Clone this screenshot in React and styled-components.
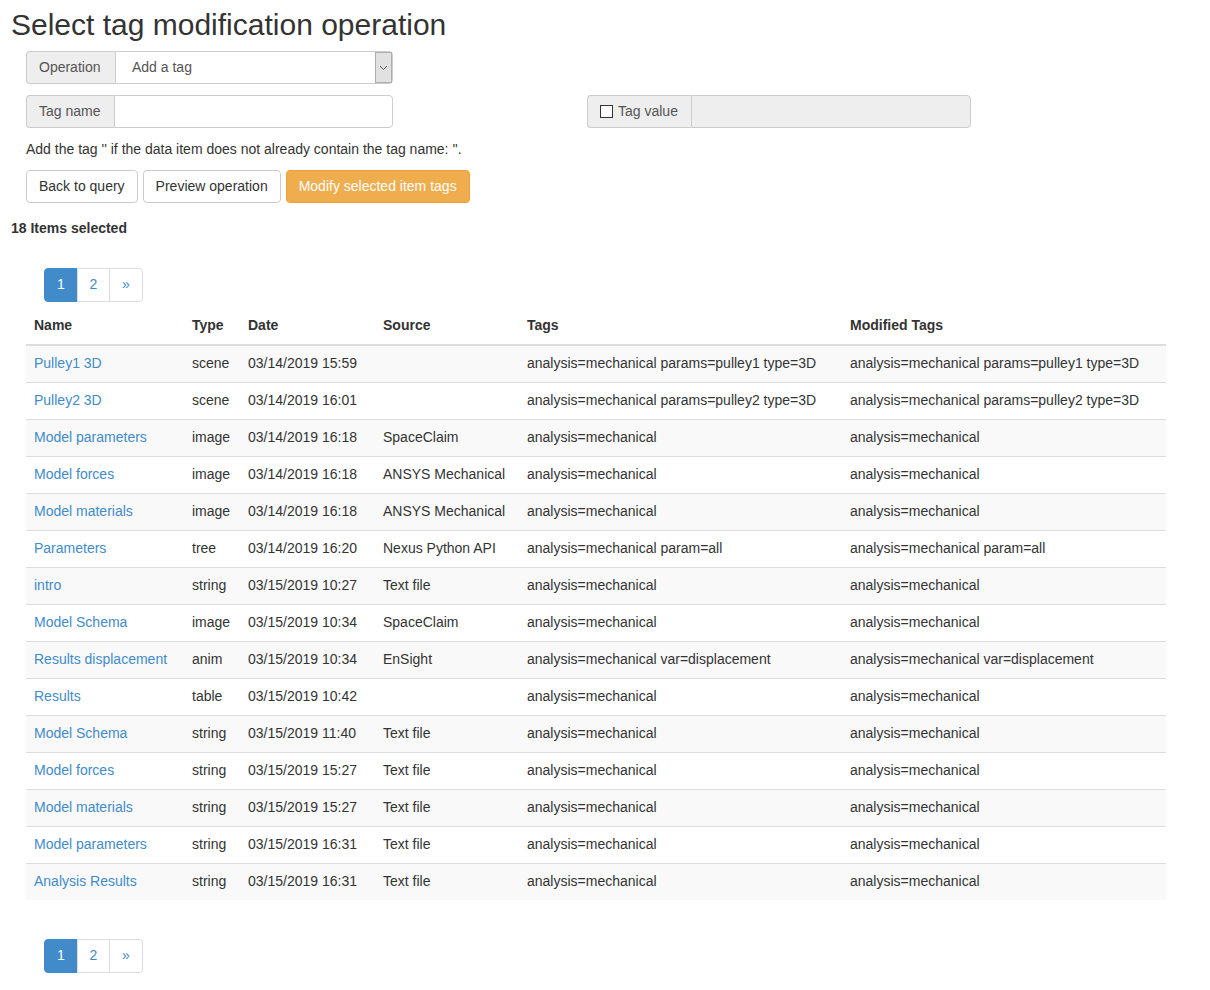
import React from "react";
import styled, { createGlobalStyle } from "styled-components";

const Global = createGlobalStyle`
  html, body { margin: 0; padding: 0; background: #fff; }
  body {
    font-family: "Liberation Sans", Arial, Helvetica, sans-serif;
    font-size: 14px;
    line-height: 1.42857;
    color: #333;
  }
  * { box-sizing: border-box; }
`;

const Page = styled.div`
  padding: 8px 0 0 11px;
  width: 1180px;
`;

const Title = styled.h1`
  margin: 0 0 10px 0;
  font-size: 30px;
  font-weight: 500;
  line-height: 1.1;
  color: #333;
`;

const Form = styled.div`
  padding-left: 15px;
`;

const FieldRow = styled.div`
  display: flex;
  margin-bottom: ${(p) => p.$mb || 11}px;
`;

const Group = styled.div`
  display: flex;
  width: ${(p) => p.$w}px;
  height: 33px;
  margin-left: ${(p) => p.$ml || 0}px;
`;

const Addon = styled.div`
  display: flex;
  align-items: center;
  gap: 4px;
  width: ${(p) => p.$w}px;
  flex: none;
  padding: 0 12px;
  background: #eee;
  border: 1px solid #ccc;
  border-right: none;
  border-radius: 4px 0 0 4px;
  color: #555;
  font-size: 14px;
`;

const Field = styled.div`
  flex: 1;
  display: flex;
  align-items: center;
  padding: 0 16px;
  border: 1px solid #ccc;
  border-radius: 0 4px 4px 0;
  background: ${(p) => (p.$disabled ? "#eee" : "#fff")};
  color: #555;
  position: relative;
`;

const SelectArrow = styled.div`
  position: absolute;
  right: 0;
  top: 0;
  bottom: 0;
  width: 17px;
  background: #e1e1e1;
  border: 1px solid #adadad;
  display: flex;
  align-items: center;
  justify-content: center;
`;

const CheckBox = styled.span`
  display: inline-block;
  width: 13px;
  height: 13px;
  border: 1px solid #333;
  background: #fff;
  margin-right: 1px;
`;

const Help = styled.p`
  margin: 0 0 10px 0;
  font-size: 14px;
`;

const Buttons = styled.div`
  display: flex;
  gap: 5px;
`;

const Button = styled.button`
  font-family: inherit;
  font-size: 14px;
  height: 33px;
  padding: 0 12px;
  border-radius: 4px;
  border: 1px solid ${(p) => (p.$warning ? "#eea236" : "#ccc")};
  background: ${(p) => (p.$warning ? "#f0ad4e" : "#fff")};
  color: ${(p) => (p.$warning ? "#fff" : "#333")};
  cursor: pointer;
`;

const Count = styled.div`
  font-weight: bold;
  margin-top: 16px;
  font-size: 14px;
`;

const Content = styled.div`
  padding-left: 15px;
`;

const Pager = styled.ul`
  display: flex;
  list-style: none;
  padding: 0;
  margin: ${(p) => p.$m};
  margin-left: 18px;
`;

const PageItem = styled.li`
  height: 34px;
  padding: 0 11px;
  display: flex;
  align-items: center;
  justify-content: center;
  min-width: ${(p) => p.$w}px;
  border: 1px solid ${(p) => (p.$active ? "#428bca" : "#ddd")};
  margin-left: ${(p) => (p.$first ? 0 : -1)}px;
  background: ${(p) => (p.$active ? "#428bca" : "#fff")};
  color: ${(p) => (p.$active ? "#fff" : "#428bca")};
  border-radius: ${(p) => p.$radius || "0"};
  font-size: 14px;
`;

const Table = styled.table`
  width: 1140px;
  border-collapse: collapse;
  border-spacing: 0;
  margin-bottom: 0;
`;

const Th = styled.th`
  text-align: left;
  font-weight: bold;
  padding: 8px 8px;
  line-height: 1.42857;
  border-bottom: 2px solid #ddd;
  width: ${(p) => p.$w}px;
  vertical-align: bottom;
`;

const Tr = styled.tr`
  background: ${(p) => (p.$odd ? "#f9f9f9" : "#fff")};
`;

const Td = styled.td`
  padding: 8px 8px;
  line-height: 1.42857;
  border-top: ${(p) => (p.$first ? "none" : "1px solid #ddd")};
  white-space: nowrap;
`;

const Link = styled.a`
  color: #428bca;
  text-decoration: none;
`;

const rows = [
  ["Pulley1 3D", "scene", "03/14/2019 15:59", "", "analysis=mechanical params=pulley1 type=3D"],
  ["Pulley2 3D", "scene", "03/14/2019 16:01", "", "analysis=mechanical params=pulley2 type=3D"],
  ["Model parameters", "image", "03/14/2019 16:18", "SpaceClaim", "analysis=mechanical"],
  ["Model forces", "image", "03/14/2019 16:18", "ANSYS Mechanical", "analysis=mechanical"],
  ["Model materials", "image", "03/14/2019 16:18", "ANSYS Mechanical", "analysis=mechanical"],
  ["Parameters", "tree", "03/14/2019 16:20", "Nexus Python API", "analysis=mechanical param=all"],
  ["intro", "string", "03/15/2019 10:27", "Text file", "analysis=mechanical"],
  ["Model Schema", "image", "03/15/2019 10:34", "SpaceClaim", "analysis=mechanical"],
  ["Results displacement", "anim", "03/15/2019 10:34", "EnSight", "analysis=mechanical var=displacement"],
  ["Results", "table", "03/15/2019 10:42", "", "analysis=mechanical"],
  ["Model Schema", "string", "03/15/2019 11:40", "Text file", "analysis=mechanical"],
  ["Model forces", "string", "03/15/2019 15:27", "Text file", "analysis=mechanical"],
  ["Model materials", "string", "03/15/2019 15:27", "Text file", "analysis=mechanical"],
  ["Model parameters", "string", "03/15/2019 16:31", "Text file", "analysis=mechanical"],
  ["Analysis Results", "string", "03/15/2019 16:31", "Text file", "analysis=mechanical"],
];

function Pagination({ m }) {
  return (
    <Pager $m={m}>
      <PageItem $first $active $w={34} $radius="4px 0 0 4px">1</PageItem>
      <PageItem $w={33}>2</PageItem>
      <PageItem $w={34} $radius="0 4px 4px 0">»</PageItem>
    </Pager>
  );
}

export default function App() {
  return (
    <>
      <Global />
      <Page>
        <Title>Select tag modification operation</Title>
        <Form>
          <FieldRow>
            <Group $w={367}>
              <Addon $w={89}>Operation</Addon>
              <Field>
                Add a tag
                <SelectArrow>
                  <svg width="9" height="6" viewBox="0 0 9 6">
                    <path d="M1 1 L4.5 4.5 L8 1" fill="none" stroke="#555" strokeWidth="1" />
                  </svg>
                </SelectArrow>
              </Field>
            </Group>
          </FieldRow>
          <FieldRow $mb={12}>
            <Group $w={367}>
              <Addon $w={88}>Tag name</Addon>
              <Field />
            </Group>
            <Group $w={384} $ml={194}>
              <Addon $w={104}>
                <CheckBox />
                Tag value
              </Addon>
              <Field $disabled />
            </Group>
          </FieldRow>
          <Help>Add the tag '' if the data item does not already contain the tag name: ''.</Help>
          <Buttons>
            <Button>Back to query</Button>
            <Button>Preview operation</Button>
            <Button $warning>Modify selected item tags</Button>
          </Buttons>
        </Form>
        <Count>18 Items selected</Count>
        <Content>
          <Pagination m="29px 0 6px 0" />
          <Table>
            <thead>
              <tr>
                <Th $w={158}>Name</Th>
                <Th $w={56}>Type</Th>
                <Th $w={135}>Date</Th>
                <Th $w={144}>Source</Th>
                <Th $w={323}>Tags</Th>
                <Th>Modified Tags</Th>
              </tr>
            </thead>
            <tbody>
              {rows.map((r, i) => (
                <Tr key={i} $odd={i % 2 === 0}>
                  <Td $first={i === 0}>
                    <Link href="#">{r[0]}</Link>
                  </Td>
                  <Td $first={i === 0}>{r[1]}</Td>
                  <Td $first={i === 0}>{r[2]}</Td>
                  <Td $first={i === 0}>{r[3]}</Td>
                  <Td $first={i === 0}>{r[4]}</Td>
                  <Td $first={i === 0}>{r[4]}</Td>
                </Tr>
              ))}
            </tbody>
          </Table>
          <Pagination m="39px 0 20px 0" />
        </Content>
      </Page>
    </>
  );
}
